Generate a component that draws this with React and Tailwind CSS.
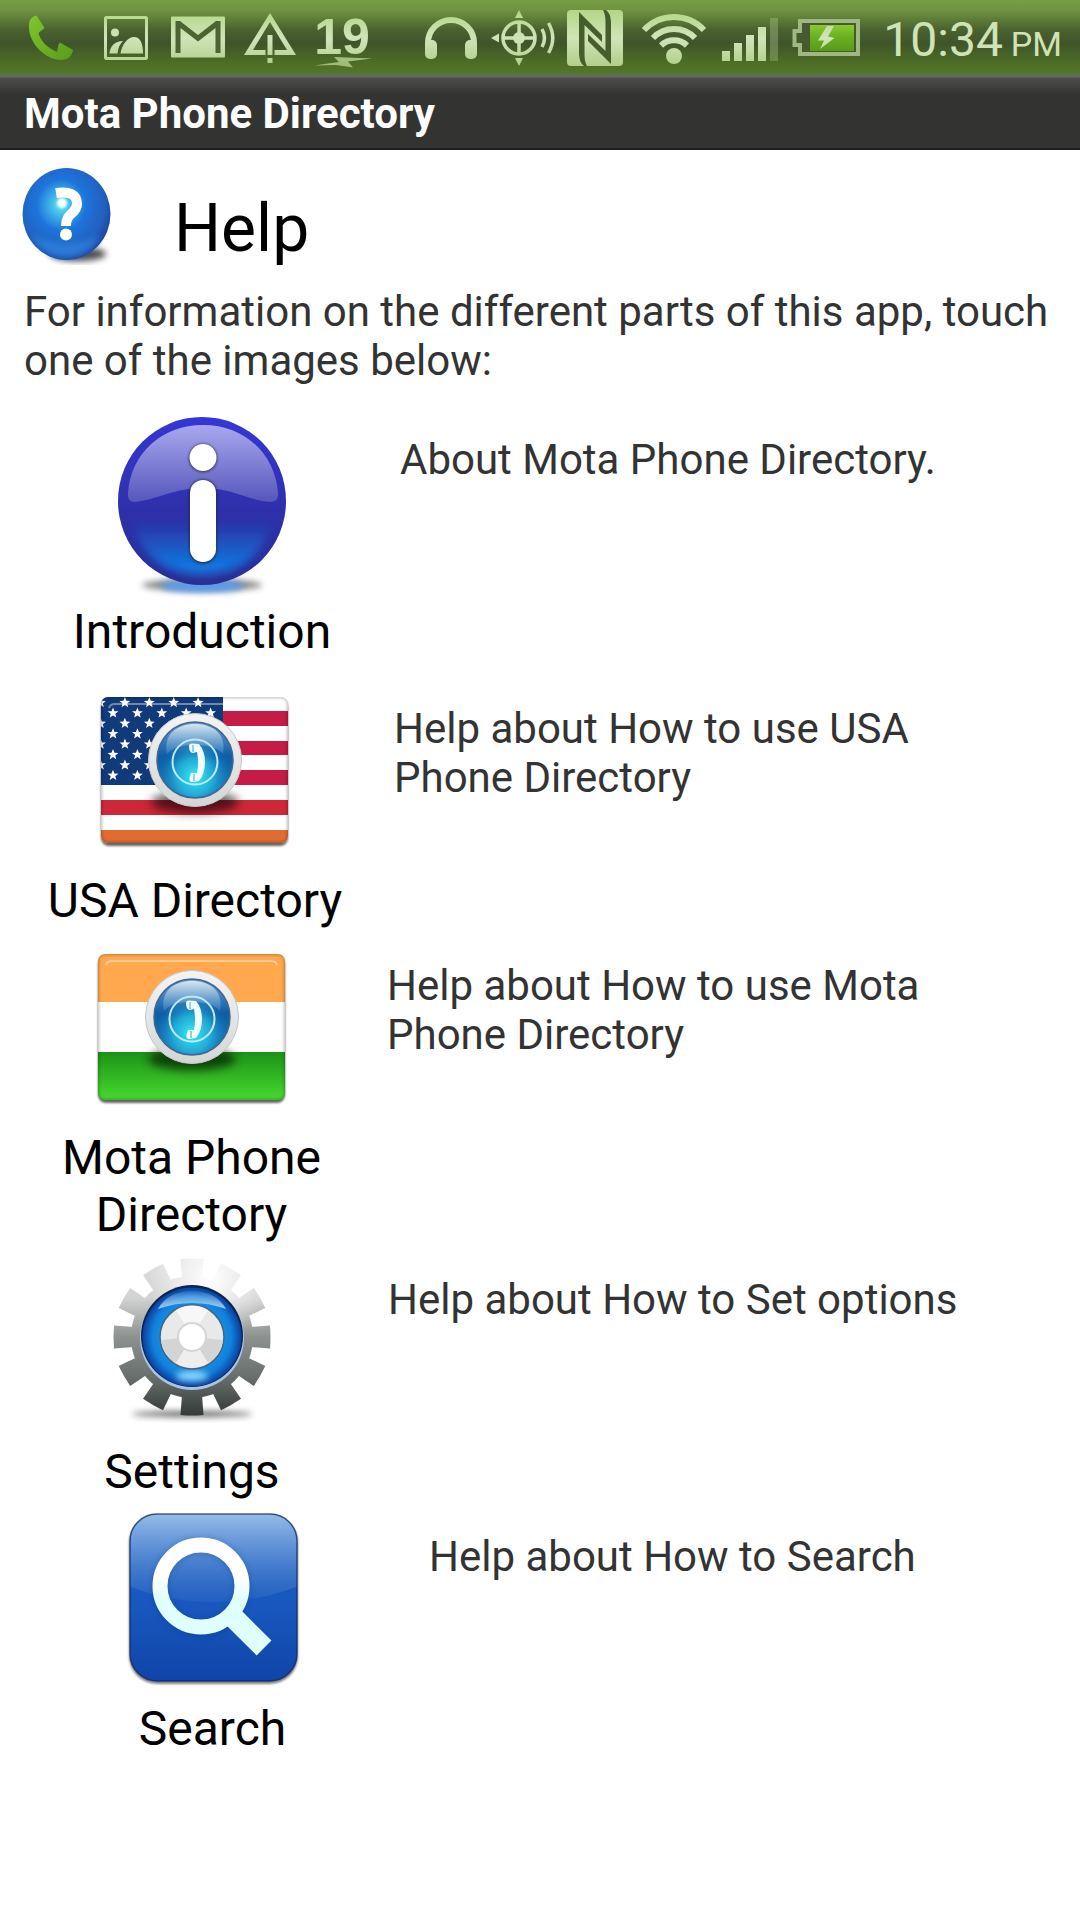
import { clsx } from 'clsx'

// Gradients and filters shared by all the drawings
const SharedDefs = () => (
  <svg width="0" height="0" className="absolute" aria-hidden="true">
    <defs>
      <linearGradient id="status" gradientUnits="userSpaceOnUse" x1="0" y1="10" x2="0" y2="66">
        <stop offset="0" stopColor="#b3d686" />
        <stop offset="0.5" stopColor="#d0e4b8" />
        <stop offset="1" stopColor="#b2ce8c" />
      </linearGradient>
      <linearGradient id="call" x1="0" y1="0" x2="1" y2="1">
        <stop offset="0" stopColor="#80c62c" />
        <stop offset="1" stopColor="#5a9a1e" />
      </linearGradient>
      <linearGradient id="charge" x1="0" y1="0" x2="0" y2="1">
        <stop offset="0" stopColor="#8ac832" />
        <stop offset="0.5" stopColor="#68ae20" />
        <stop offset="1" stopColor="#5a9a18" />
      </linearGradient>
      <filter id="blur3" x="-30%" y="-100%" width="160%" height="300%">
        <feGaussianBlur stdDeviation="3" />
      </filter>
      <filter id="blur5" x="-30%" y="-100%" width="160%" height="300%">
        <feGaussianBlur stdDeviation="5" />
      </filter>
      <filter id="blur1" x="-20%" y="-20%" width="140%" height="140%">
        <feGaussianBlur stdDeviation="1" />
      </filter>
      <linearGradient id="globe" x1="0" y1="0" x2="0" y2="1">
        <stop offset="0" stopColor="#6ea4cf" />
        <stop offset="0.45" stopColor="#0d5ca6" />
        <stop offset="1" stopColor="#1583bd" />
      </linearGradient>
      <radialGradient id="globeGlow" cx="0.5" cy="0.72" r="0.5">
        <stop offset="0" stopColor="#34f0f4" />
        <stop offset="0.5" stopColor="#26b8e0" stopOpacity="0.8" />
        <stop offset="1" stopColor="#1478b8" stopOpacity="0" />
      </radialGradient>
      <linearGradient id="globeShine" x1="0" y1="0" x2="0" y2="1">
        <stop offset="0" stopColor="#e4eef7" stopOpacity="0.9" />
        <stop offset="1" stopColor="#5a9cd0" stopOpacity="0.35" />
      </linearGradient>
      <linearGradient id="globeRing" x1="0" y1="0" x2="0" y2="1">
        <stop offset="0" stopColor="#f4f4f4" />
        <stop offset="1" stopColor="#d4d6d6" />
      </linearGradient>
      <clipPath id="flagClip">
        <rect x="6" y="25" width="187" height="146" rx="7" />
      </clipPath>
    </defs>
  </svg>
)

const StatusIcon = ({ x, width, label, children }) => (
  <svg
    width={width}
    height="75"
    viewBox={`${x} 0 ${width} 75`}
    fill="url(#status)"
    role="img"
    aria-label={label}
    className="shrink-0"
  >
    {children}
  </svg>
)

const StatusBar = () => (
  <div className="flex h-[75px] items-center justify-between bg-[linear-gradient(#789e46_0%,#6f9240_14%,#4a6130_40%,#40542a_58%,#4b6a27_80%,#55782a_100%)] pl-[22px] pr-[18px]">
    <div className="flex gap-4">
      <StatusIcon x={22} width={57} label="Call">
        <path
          fill="url(#call)"
          d="M30 20 C32 17 35 15 37 16 L44.5 28 L38.5 33 C40 40 47 48 57 52 C58 48 58 44 60 42.5 L73 50 C72 56 68 60 61 60 C46 60 29 44 29 27 C29 24 29 22 30 20Z"
        />
      </StatusIcon>
      <StatusIcon x={95} width={57} label="Screenshot saved">
        <rect x="105.500" y="17.500" width="41" height="41" rx="1" fill="none" stroke="url(#status)" strokeWidth="3" />
        <circle cx="115" cy="32.500" r="4" />
        <path d="M109.500 53.500 C110 46 115 41 123 41 C120 44 118 48 117.500 53.500Z" />
        <path d="M120.500 53.500 C122 44 128 37 134 37 C140 37 143 43 143 53.500Z" />
      </StatusIcon>
      <StatusIcon x={168} width={57} label="New mail">
        <rect x="171" y="16.500" width="54" height="41" rx="1" />
        <path fill="#4c6332" d="M175.500 53 V21 H180 L198 35 L216 21 H220.500 V53 H215.500 V28 L198 41.500 L180.500 28 V53Z" />
      </StatusIcon>
      <StatusIcon x={241} width={57} label="Warning">
        <path d="M270 13 L296 55 H274.500 V50 H287 L270 22 L253 50 H265.500 V55 H244Z" />
        <rect x="267.500" y="35" width="5" height="20" />
        <rect x="267.500" y="58" width="5" height="5" />
      </StatusIcon>
      <StatusIcon x={314} width={60} label="19 degrees">
        <text x="342" y="54" textAnchor="middle" fontSize="50" fontWeight="700" fontFamily="Liberation Sans, Arial, sans-serif">19</text>
        <path opacity="0.8" d="M314 65.500 L339 62 L334 57 L372 58.500 L348 61.500 L353 67.500 L336 65Z" />
      </StatusIcon>
    </div>
    <div className="flex items-center gap-2">
      <StatusIcon x={424} width={56} label="Headphones">
        <path fill="none" stroke="url(#status)" strokeWidth="6" d="M429 47 V43 A23 23 0 0 1 475 43 V47" />
        <rect x="426" y="40" width="12" height="19" rx="5" />
        <rect x="466" y="40" width="12" height="19" rx="5" />
      </StatusIcon>
      <StatusIcon x={488} width={72} label="Location">
        <g fill="none" stroke="url(#status)" strokeWidth="3.500">
          <circle cx="520" cy="38" r="16" />
          <path d="M520.100 22 L520 54 M504 38.100 L536 38" />
          <path d="M543 29 Q548 38 543 47 M549.500 23 Q558 38 549.500 53" />
        </g>
        <circle cx="520" cy="38" r="6" />
        <path d="M520 10 L524 18 H516Z M520 66 L524 58 H516Z M492 38 L500 33.500 V42.500Z" />
      </StatusIcon>
      <StatusIcon x={568} width={56} label="NFC">
        <rect x="568" y="10" width="56" height="56" rx="4" />
        <path fill="#465d2c" d="M580 12 L603 35 V42 L585.500 25 V54 Q585.500 62 588 66 H585 Q580.500 63 580 54Z" />
        <path fill="#465d2c" d="M612 64 L589 41 V34 L606.500 51 V22 Q606.500 14 604 10 H607 Q611.500 13 612 22Z" />
      </StatusIcon>
      <StatusIcon x={632} width={80} label="Wi-Fi">
        <g fill="none" stroke="url(#status)" strokeWidth="6">
          <path d="M645 30 A41 41 0 0 1 705 30" />
          <path d="M654 38 A29 29 0 0 1 696 38" />
          <path d="M662 45.500 A19 19 0 0 1 688 45.500" />
        </g>
        <circle cx="675" cy="56" r="8" />
      </StatusIcon>
      <StatusIcon x={720} width={64} label="Signal strength">
        <path d="M723 51h8v10h-8z M735 43h8v18h-8z M747 35h8v26h-8z M759 27h8v34h-8z" />
        <rect x="771" y="18" width="8" height="43" opacity="0.3" />
      </StatusIcon>
      <StatusIcon x={792} width={72} label="Battery charging">
        <path fill="#46592f" stroke="#9db880" strokeWidth="4" d="M801 21 H859 V54 H801 V45 H795.500 V31 H801Z" />
        <rect x="811" y="25" width="44" height="26" fill="url(#charge)" />
        <path d="M828 26 H835 L829 36.500 L835.500 38 L821 49 L825 40.500 H819Z" />
      </StatusIcon>
      <div className="ml-3 mt-1 whitespace-nowrap text-[#cfe3b6]">
        <span className="text-[48px]">10:34</span>
        <span className="ml-2 text-[34px]">PM</span>
      </div>
    </div>
  </div>
)

const HelpIcon = () => (
  <svg width="96" height="100" viewBox="18 165 96 100" aria-hidden="true">
    <defs>
      <radialGradient id="helpBall" cx="0.44" cy="0.4" r="0.62">
        <stop offset="0" stopColor="#6cf4f4" />
        <stop offset="0.14" stopColor="#48c4ee" />
        <stop offset="0.45" stopColor="#1d74dc" />
        <stop offset="0.8" stopColor="#2260bd" />
        <stop offset="1" stopColor="#1f3f98" />
      </radialGradient>
    </defs>
    <ellipse cx="78" cy="254" rx="28" ry="7" fill="#000" opacity="0.7" filter="url(#blur3)" />
    <ellipse cx="66.500" cy="214" rx="44" ry="46" fill="url(#helpBall)" />
    <path d="M32 235 Q66 252 101 235 Q90 257 67 258 Q43 257 32 235Z" fill="#2d8fe8" opacity="0.6" filter="url(#blur3)" />
    <path fill="none" stroke="#fff" strokeWidth="10" d="M56 193 C69 191 77 194 77 204 C77 214 66 212 66 226" />
    <circle cx="62" cy="203" r="5" fill="#fff" filter="url(#blur1)" />
    <circle cx="66" cy="234.500" r="6" fill="#fff" />
  </svg>
)

const Picture = ({ children }) => (
  <svg width="200" height="200" viewBox="0 0 200 200" aria-hidden="true" className="block">
    {children}
  </svg>
)

const InfoPicture = () => (
  <Picture>
    <defs>
      <linearGradient id="infoBase" x1="0" y1="0" x2="0" y2="1">
        <stop offset="0" stopColor="#3636d6" />
        <stop offset="0.5" stopColor="#2f31ae" />
        <stop offset="0.7" stopColor="#2c2fa4" />
        <stop offset="1" stopColor="#2c2a90" />
      </linearGradient>
      <linearGradient id="infoGlow" x1="0" y1="0" x2="0" y2="1">
        <stop offset="0" stopColor="#1474dc" stopOpacity="0" />
        <stop offset="0.8" stopColor="#1274de" />
      </linearGradient>
      <linearGradient id="infoShine" x1="0" y1="0" x2="0" y2="1">
        <stop offset="0" stopColor="#a8a8ee" />
        <stop offset="1" stopColor="#5656bc" />
      </linearGradient>
    </defs>
    <ellipse cx="100" cy="182" rx="60" ry="6" fill="#333" opacity="0.6" filter="url(#blur3)" />
    <ellipse cx="100" cy="183" rx="42" ry="6" fill="#5a9cf0" filter="url(#blur3)" />
    <circle cx="100" cy="98" r="84" fill="url(#infoBase)" />
    <path d="M30 118 H170 Q158 170 100 172 Q42 170 30 118Z" fill="url(#infoGlow)" filter="url(#blur5)" />
    <path
      fill="url(#infoShine)"
      d="M33 99 Q25 99 26 90 C29 50 60 22 101 22 C142 22 173 50 176 90 Q177 99 168 99 C148 98 130 85 101 85 C72 85 54 97 33 99Z"
    />
    <g fill="#222" opacity="0.6" filter="url(#blur1)">
      <circle cx="101" cy="55" r="14.500" />
      <rect x="87" y="76" width="28" height="85" rx="14" />
    </g>
    <circle cx="101" cy="54.500" r="13.500" fill="#fff" />
    <rect x="88" y="77" width="26" height="82" rx="13" fill="#fff" />
  </Picture>
)

// Round phone badge that sits on both flags
const PhoneBadge = () => (
  <g>
    <ellipse cx="100" cy="130" rx="44" ry="11" fill="#000" opacity="0.6" filter="url(#blur5)" />
    <circle cx="100" cy="88" r="46.500" fill="url(#globeRing)" stroke="#c4c8ca" strokeWidth="1" />
    <circle cx="100" cy="88" r="38" fill="url(#globe)" stroke="#46648e" strokeWidth="1.500" />
    <circle cx="100" cy="88" r="37" fill="url(#globeGlow)" />
    <path d="M72 82 C68 62 82 52 100 52 C118 52 132 62 128 82 C122 75 112 73 100 73 C88 73 78 75 72 82Z" fill="url(#globeShine)" />
    <circle cx="100" cy="90" r="22.500" fill="none" stroke="#bdeaf6" strokeWidth="2" />
    <path
      fill="#eefcff"
      d="M94 74 Q94 71.500 97 71.500 L104 72 Q110 79 110 90 Q110 102 104 109 L97 110 Q94 110 94.500 106 L95.500 102 Q96 100 99 101 L102 101 Q104 90 102 80 L98 81 Q94 81 94 74Z"
    />
    <path d="M98 73 V80 M99 102 V109" stroke="#3aa4cc" strokeWidth="1" />
  </g>
)

const Flag = ({ children }) => (
  <Picture>
    <rect x="6" y="27" width="187" height="147" rx="8" fill="#000" opacity="0.6" filter="url(#blur1)" />
    <g clipPath="url(#flagClip)">
      {children}
      <rect x="5" y="24" width="189" height="148" rx="8" fill="none" stroke="#000" strokeWidth="5" opacity="0.2" filter="url(#blur1)" />
      <path d="M14 36 Q15 32 20 32 H178 Q184 32 185 36" fill="none" stroke="#fff" strokeWidth="2" opacity="0.4" />
    </g>
    <PhoneBadge />
  </Picture>
)

const starRows = [0, 1, 2, 3, 4, 5, 6, 7]
const starPath = 'M0 -5.5 L1.5 -1.7 L5.400 -1.6 L2.300 0.900 L3.300 4.700 L0 2.500 L-3.300 4.700 L-2.300 0.900 L-5.400 -1.6 L-1.5 -1.7Z'

const UsaPicture = () => (
  <Flag>
    <rect x="6" y="25" width="187" height="146" fill="#fff" />
    <path d="M6 39h187v15h-187z M6 69h187v14h-187z M6 98h187v15h-187z" fill="#c41c44" />
    <path d="M6 128h187v15h-187z" fill="#cd2838" />
    <path d="M6 158h187v13h-187z" fill="#e06c30" />
    <rect x="6" y="25" width="122" height="88" fill="#113a7a" />
    {starRows.map((row) =>
      [0, 1, 2, 3, 4].map((col) => (
        <path
          key={`${row}-${col}`}
          d={starPath}
          fill="#fff"
          transform={`translate(${(row % 2 ? 18 : 5.5) + col * 24.4} ${30.5 + row * 10.4})`}
        />
      ))
    )}
  </Flag>
)

const IndiaPicture = () => (
  <Flag>
    <defs>
      <linearGradient id="green" x1="0" y1="0" x2="0" y2="1">
        <stop offset="0" stopColor="#1c9216" />
        <stop offset="1" stopColor="#48da30" />
      </linearGradient>
    </defs>
    <rect x="6" y="25" width="187" height="49" fill="#ffa84e" />
    <rect x="6" y="73" width="187" height="51" fill="#fff" />
    <rect x="6" y="123" width="187" height="48" fill="url(#green)" />
  </Flag>
)

const teeth = [0, 30, 60, 90, 120, 150, 180, 210, 240, 270, 300, 330]

const GearPicture = () => (
  <Picture>
    <defs>
      <linearGradient id="steel" gradientUnits="userSpaceOnUse" x1="0" y1="16" x2="0" y2="172">
        <stop offset="0" stopColor="#dedede" />
        <stop offset="0.25" stopColor="#d2d3d2" />
        <stop offset="0.5" stopColor="#8d918f" />
        <stop offset="0.75" stopColor="#6a706d" />
        <stop offset="1" stopColor="#353a38" />
      </linearGradient>
      <radialGradient id="steelShine" gradientUnits="userSpaceOnUse" cx="118" cy="36" r="62">
        <stop offset="0" stopColor="#fff" />
        <stop offset="1" stopColor="#fff" stopOpacity="0" />
      </radialGradient>
      <radialGradient id="blueRing" cx="0.5" cy="0.5" r="0.5">
        <stop offset="0.6" stopColor="#1390e4" />
        <stop offset="0.8" stopColor="#1080dc" />
        <stop offset="1" stopColor="#0b3f9c" />
      </radialGradient>
      <linearGradient id="ringShine" x1="0" y1="0" x2="0" y2="1">
        <stop offset="0" stopColor="#e8f2fc" stopOpacity="0.1" />
        <stop offset="1" stopColor="#e8f4ff" stopOpacity="0.7" />
      </linearGradient>
      <mask id="gearMask">
        <g fill="#fff">
          <circle cx="100" cy="94" r="61" />
          {teeth.map((angle) => (
            <path key={angle} d="M90 36 L88.500 16 Q100 15 111.500 16 L110 36Z" transform={`rotate(${angle} 100 94)`} />
          ))}
        </g>
      </mask>
    </defs>
    <ellipse cx="100" cy="171" rx="60" ry="3" fill="#000" opacity="0.6" filter="url(#blur3)" />
    <g mask="url(#gearMask)">
      <rect x="10" y="4" width="180" height="180" fill="url(#steel)" />
      <rect x="10" y="4" width="180" height="180" fill="url(#steelShine)" />
    </g>
    <circle cx="100" cy="95" r="52" fill="#a9c4e4" />
    <circle cx="100" cy="93" r="51" fill="#0a2450" />
    <circle cx="100" cy="94" r="49.500" fill="url(#blueRing)" />
    <path d="M66 66 Q76 48 100 48 Q124 48 134 66 Q118 60 100 60 Q82 60 66 66Z" fill="url(#ringShine)" />
    <ellipse cx="100" cy="133" rx="16" ry="5" fill="#8cd4fa" filter="url(#blur3)" />
    <circle cx="100" cy="94" r="32" fill="#e9e9e9" stroke="#46627e" strokeWidth="1.500" />
    <path d="M100 94 L84 67 A31 31 0 0 1 116 67Z" fill="#f7f7f7" />
    <path d="M100 94 L69 97 A31 31 0 0 0 84 120Z M100 94 L131 97 A31 31 0 0 1 116 120Z" fill="#d3d4d4" />
    <path d="M100 94 L84 120 A31 31 0 0 0 116 120Z" fill="#eee" />
    <circle cx="100" cy="94" r="14" fill="#fff" stroke="#d4d4d4" strokeWidth="2" />
  </Picture>
)

const SearchPicture = () => (
  <Picture>
    <defs>
      <linearGradient id="tile" x1="0" y1="0" x2="0" y2="1">
        <stop offset="0" stopColor="#1b62c8" />
        <stop offset="0.55" stopColor="#1858be" />
        <stop offset="1" stopColor="#1044a8" />
      </linearGradient>
      <linearGradient id="tileShine" x1="0" y1="0" x2="0" y2="1">
        <stop offset="0" stopColor="#98bee8" />
        <stop offset="1" stopColor="#2c68c4" stopOpacity="0.5" />
      </linearGradient>
      <linearGradient id="lens" gradientUnits="userSpaceOnUse" x1="0" y1="75" x2="0" y2="100">
        <stop offset="0" stopColor="#fff" />
        <stop offset="1" stopColor="#e0ffff" />
      </linearGradient>
      <clipPath id="tileClip">
        <rect x="17" y="14" width="167" height="167" rx="27" />
      </clipPath>
    </defs>
    <rect x="16" y="15" width="169" height="169" rx="28" fill="#000" opacity="0.5" filter="url(#blur1)" />
    <rect x="17" y="14" width="167" height="167" rx="27" fill="url(#tile)" />
    <path d="M16 13 H185 V86 Q145 102 100 102 Q55 102 16 86Z" fill="url(#tileShine)" clipPath="url(#tileClip)" />
    <rect x="17" y="14" width="167" height="167" rx="27" fill="none" stroke="#10245c" strokeWidth="1.500" opacity="0.7" />
    <g fill="none" stroke="#0a3080" opacity="0.3" filter="url(#blur3)">
      <circle cx="88" cy="87" r="41" strokeWidth="16" />
    </g>
    <g fill="none" stroke="url(#lens)">
      <circle cx="88" cy="86" r="41" strokeWidth="15" />
      <path d="M118 115 L151 148" strokeWidth="21" />
    </g>
  </Picture>
)

const topics = [
  { label: 'Introduction', text: 'About Mota Phone Directory.', Icon: InfoPicture, column: 'w-[400px] pl-1', row: 'mb-3' },
  { label: 'USA Directory', text: 'Help about How to use USA Phone Directory', Icon: UsaPicture, column: 'mr-1 w-[390px]' },
  { label: 'Mota Phone Directory', text: 'Help about How to use Mota Phone Directory', Icon: IndiaPicture, column: 'mr-1 w-[383px]' },
  { label: 'Settings', text: 'Help about How to Set options', Icon: GearPicture, column: 'mr-1 w-[384px]' },
  { label: 'Search', text: 'Help about How to Search', Icon: SearchPicture, column: 'mr-1 w-[425px]' },
]

const App = () => {
  return (
    <div className="min-h-screen bg-white font-['Roboto','Noto_Sans',sans-serif]">
      <SharedDefs />
      <StatusBar />
      <header className="flex h-[75px] items-center border-b-2 border-[#1f1f1f] bg-[linear-gradient(#666_0,#666_2px,#4c4c4c_3px,#333331_20px)] px-6 pt-1">
        <h1 className="text-[42px] font-bold text-white">Mota Phone Directory</h1>
      </header>

      <main>
        <div className="flex items-start pl-[18px] pt-[15px]">
          <HelpIcon />
          <h2 className="ml-[60px] mt-[25px] text-[66px] leading-[78px] text-black">Help</h2>
        </div>
        <p className="mt-[19px] pl-6 pr-4 text-[42px] leading-[49px] text-[#333]">
          For information on the different parts of this app, touch one of the images below:
        </p>

        <ul className="mt-[18px]">
          {topics.map(({ label, text, Icon, column, row }) => (
            <li key={label} className={clsx('flex items-start', row)}>
              <button type="button" className={clsx('flex shrink-0 flex-col items-center', column)}>
                <Icon />
                <span className="max-w-[300px] text-center text-[48px] leading-[57px] text-black">{label}</span>
              </button>
              <p className="flex-1 pr-[60px] pt-8 text-[42px] leading-[49px] text-[#333]">{text}</p>
            </li>
          ))}
        </ul>
      </main>
    </div>
  )
}

export default App
